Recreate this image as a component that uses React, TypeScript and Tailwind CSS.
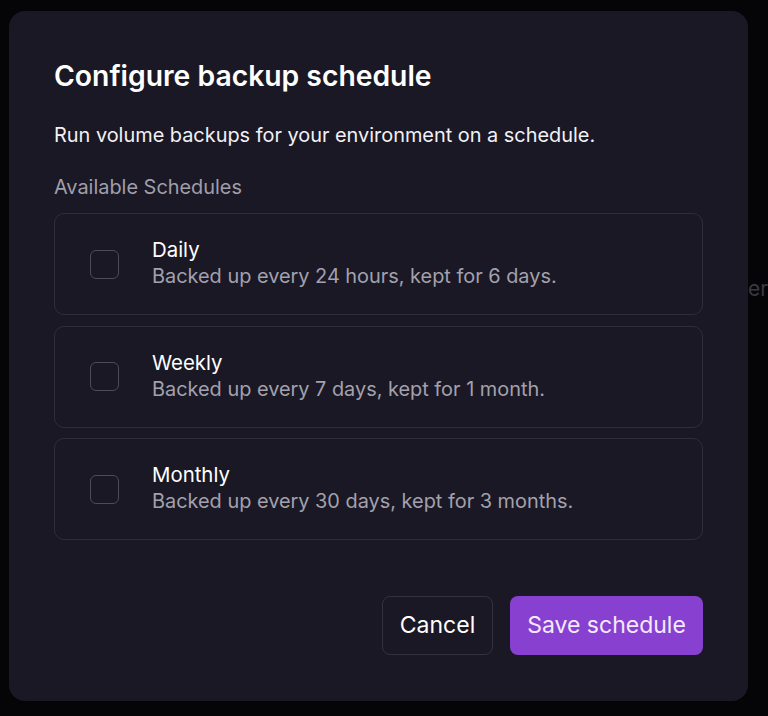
import React from 'react';

const schedules = [
    { name: 'Daily', detail: 'Backed up every 24 hours, kept for 6 days.' },
    { name: 'Weekly', detail: 'Backed up every 7 days, kept for 1 month.' },
    { name: 'Monthly', detail: 'Backed up every 30 days, kept for 3 months.' },
];

export default function App() {
    return (
        <div className="relative w-[768px] h-[716px] bg-[#050507] overflow-hidden font-['Inter','Liberation_Sans',sans-serif]">
            {/* page text peeking out behind the overlay */}
            <span className="absolute left-[748px] top-[273px] text-[21px] text-[#3a3942]">er</span>

            <div className="absolute left-[9px] top-[11px] w-[739px] h-[690px] rounded-[16px] bg-[#1a1824] px-[45px] pt-[48px] pb-[46px] flex flex-col">
                <h2 className="text-[28.3px] leading-[34px] font-semibold text-white">Configure backup schedule</h2>
                <p className="mt-[28px] text-[19.9px] leading-[28px] text-[#f2f1f5]">
                    Run volume backups for your environment on a schedule.
                </p>
                <div className="mt-[24px] text-[19.9px] leading-[28px] text-[#a09eab]">Available Schedules</div>

                <div className="mt-[12px] flex flex-col gap-[10.5px]">
                    {schedules.map((s) => (
                        <label
                            key={s.name}
                            className="h-[102px] rounded-[10px] border border-[#2f2d3b] flex items-center pl-[35px] gap-[33px] cursor-pointer"
                        >
                            <span className="w-[29px] h-[29px] rounded-[6px] border-[1.5px] border-[#4d4b5a] shrink-0" />
                            <span className="flex flex-col -mt-[2px]">
                                <span className="text-[20.4px] leading-[27px] text-white">{s.name}</span>
                                <span className="text-[19.9px] leading-[27px] text-[#a3a1ad]">{s.detail}</span>
                            </span>
                        </label>
                    ))}
                </div>

                <div className="mt-auto flex justify-end gap-[17px]">
                    <button className="h-[59px] w-[111px] rounded-[8px] border border-[#33313f] text-[23px] text-white">
                        Cancel
                    </button>
                    <button className="h-[59px] w-[193px] rounded-[8px] bg-[#8840d0] text-[23px] text-[#f3eafd]">
                        Save schedule
                    </button>
                </div>
            </div>
        </div>
    );
}
